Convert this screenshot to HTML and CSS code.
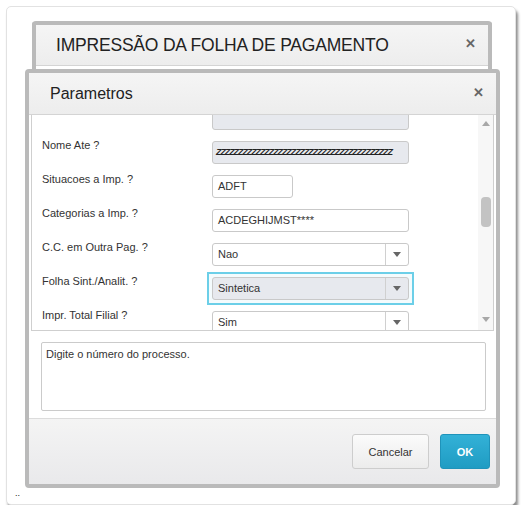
FILE: index.html
```html
<!DOCTYPE html>
<html>
<head>
    <title>Parametros</title>
    <link rel="stylesheet" href="styles.css">
</head>
<body>
    <div class="frame">
        <div class="dlg dlg-back">
            <div class="dlg-head big">
                <span>IMPRESSÃO DA FOLHA DE PAGAMENTO</span>
                <span class="close">&#x2715;</span>
            </div>
        </div>

        <div class="dlg dlg-front">
            <div class="dlg-head">
                <span>Parametros</span>
                <span class="close">&#x2715;</span>
            </div>

            <div class="panel">
                <div class="rows">
                    <div class="row">
                        <label></label>
                        <div class="field wide disabled"></div>
                    </div>
                    <div class="row">
                        <label>Nome Ate ?</label>
                        <div class="field wide disabled zz">ZZZZZZZZZZZZZZZZZZZZZZZZZZZZZZZZZZZZZZZZ</div>
                    </div>
                    <div class="row">
                        <label>Situacoes a Imp. ?</label>
                        <div class="field short">ADFT</div>
                    </div>
                    <div class="row">
                        <label>Categorias a Imp. ?</label>
                        <div class="field wide">ACDEGHIJMST****</div>
                    </div>
                    <div class="row">
                        <label>C.C. em Outra Pag. ?</label>
                        <div class="field wide select"><span>Nao</span><i class="arrow"></i></div>
                    </div>
                    <div class="row">
                        <label>Folha Sint./Analit. ?</label>
                        <div class="focus-ring">
                            <div class="field wide select disabled"><span>Sintetica</span><i class="arrow"></i></div>
                        </div>
                    </div>
                    <div class="row">
                        <label>Impr. Total Filial ?</label>
                        <div class="field wide select"><span>Sim</span><i class="arrow"></i></div>
                    </div>
                </div>
                <div class="scrollbar">
                    <i class="sb-up"></i>
                    <div class="sb-track"><div class="sb-thumb"></div></div>
                    <i class="sb-down"></i>
                </div>
            </div>

            <div class="help">
                <div class="help-box">Digite o número do processo.</div>
            </div>

            <div class="footer">
                <button class="btn">Cancelar</button>
                <button class="btn btn-ok">OK</button>
            </div>
        </div>

        <span class="dots">..</span>
    </div>
</body>
</html>
```

FILE: styles.css
```css
body { margin: 0; background: #fff; font-family: "Liberation Sans", Arial, sans-serif; color: #333; }

.frame { position: relative; margin: 6px 0 0 6px; width: 510px; height: 499px; box-sizing: border-box; background: #fff; border: 1px solid #e2e2e2; border-radius: 5px; box-shadow: 2px 4px 3px rgba(0,0,0,.45); }

.dlg { position: absolute; box-sizing: border-box; border: 4px solid #bababa; border-radius: 4px; background: #fff; }
.dlg-back { left: 25px; top: 14px; width: 460px; height: 64px; border-bottom: none; }
.dlg-front { left: 18px; top: 62px; width: 475px; height: 419px; display: flex; flex-direction: column; }

.dlg-head { display: flex; align-items: center; justify-content: space-between; height: 41px; padding: 0 12px 0 21px; background: linear-gradient(#f5f5f5, #ededed); border-bottom: 1px solid #d4d4d4; font-size: 16px; color: #222; flex: none; }
.dlg-head.big { height: 40px; padding-left: 20px; font-size: 17.5px; letter-spacing: -0.2px; }
.close { font-size: 13px; font-weight: bold; color: #666; margin-top: -3px; }

.panel { display: flex; height: 216px; margin: 0 2px; box-sizing: border-box; border: 1px solid #cfcfcf; border-top: none; overflow: hidden; flex: none; }
.rows { flex: 1; margin-top: -11px; }
.row { display: flex; height: 34px; }
.row label { width: 170px; padding-left: 10px; font-size: 11px; line-height: 14px; }
.field { box-sizing: border-box; height: 23px; margin-top: 3px; padding: 0 5px; border: 1px solid #c9c9c9; border-radius: 3px; background: #fff; font-size: 11px; line-height: 21px; white-space: nowrap; overflow: hidden; }
.wide { width: 197px; }
.short { width: 81px; }
.disabled { background: #e7e9ee; }
.zz { font-style: italic; font-size: 9px; letter-spacing: -1.1px; padding-left: 3px; font-weight: bold; color: #222; }
.select { display: flex; padding-right: 0; }
.select span { flex: 1; }
.arrow { width: 22px; border-left: 1px solid #d0d0d0; position: relative; }
.arrow::after { content: ""; position: absolute; left: 7px; top: 8px; border-style: solid; border-color: #666 transparent transparent transparent; border-width: 5px 4px 0 4px; }

.focus-ring { margin: -2px 0 0 -5px; height: 33px; padding: 0 3px; border: 2px solid #6ccfe8; box-sizing: border-box; background: #f4fbfd; }
.focus-ring .field { margin-top: 3px; }

.scrollbar { width: 15px; background: #f7f7f7; display: flex; flex-direction: column; align-items: center; }
.sb-up, .sb-down { height: 16px; position: relative; width: 15px; }
.sb-up::after { content: ""; position: absolute; left: 4px; top: 6px; border-style: solid; border-color: transparent transparent #a8a8a8 transparent; border-width: 0 4px 5px 4px; }
.sb-down::after { content: ""; position: absolute; left: 4px; top: 3px; border-style: solid; border-color: #a8a8a8 transparent transparent transparent; border-width: 5px 4px 0 4px; }
.sb-track { flex: 1; width: 15px; }
.sb-thumb { margin: 66px 0 0 3px; width: 10px; height: 30px; border-radius: 4px; background: #c3c3c3; }

.help { height: 87px; padding: 11px 10px 0 12px; box-sizing: border-box; flex: none; }
.help-box { height: 69px; box-sizing: border-box; border: 1px solid #cbcbcb; border-radius: 2px; padding: 5px 4px; font-size: 11px; }

.footer { flex: 1; display: flex; justify-content: flex-end; align-items: flex-start; gap: 11px; padding: 15px 6px 0 0; border-top: 1px solid #dcdcdc; background: linear-gradient(#f4f4f4, #e9e9eb); }
.btn { height: 35px; width: 77px; border: 1px solid #cdcdcd; border-radius: 3px; background: linear-gradient(#fbfbfb, #ececec); font-family: "Liberation Sans", Arial, sans-serif; font-size: 11px; color: #333; }
.btn-ok { width: 50px; border-color: #1f93ba; background: linear-gradient(#33b1d7, #1f9cc3); color: #fff; font-weight: bold; }

.dots { position: absolute; left: 8px; bottom: 6px; font-size: 9px; line-height: 9px; color: #222; }
```
